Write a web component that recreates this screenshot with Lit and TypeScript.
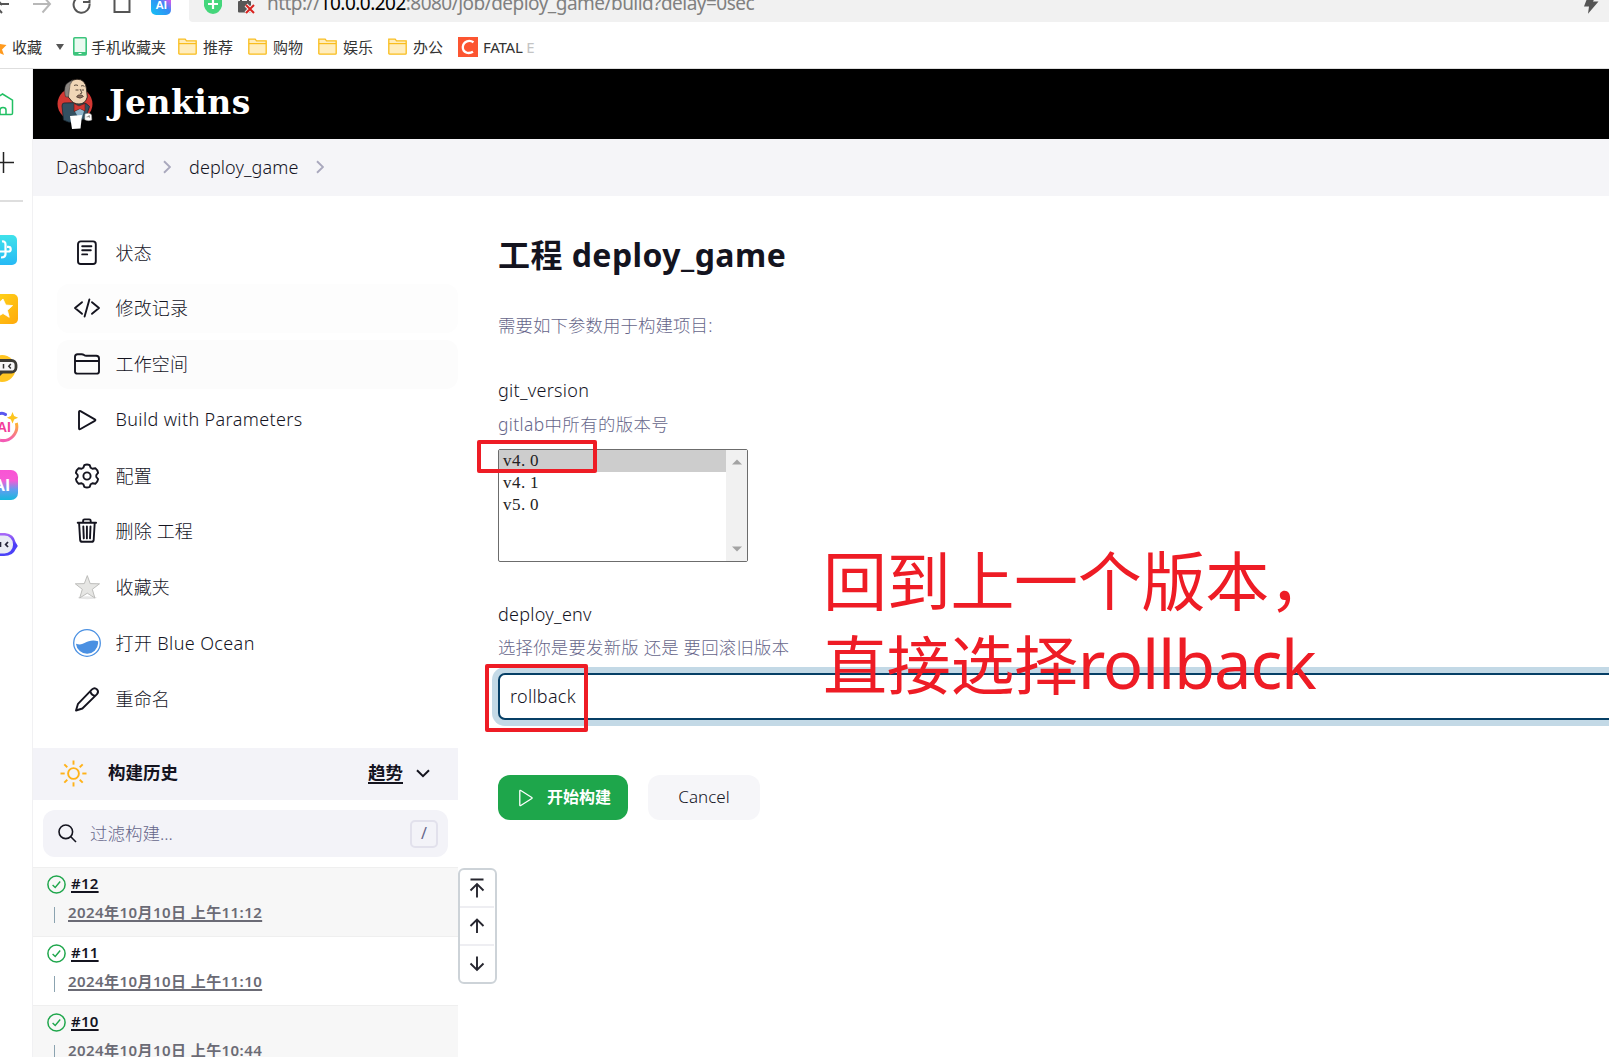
import { LitElement, html, css, svg, TemplateResult } from "lit";
import { customElement } from "lit/decorators.js";

const icons: Record<string, TemplateResult> = {
  status: html`<svg class="ic" viewBox="0 0 28 28"><g fill="none" stroke="#14141f" stroke-width="1.9" stroke-linecap="round" stroke-linejoin="round"><rect x="5" y="2.4" width="17.8" height="22.6" rx="2.8"/><path d="M9.2 7.2h9.2M9.2 11.3h8.6M9.2 15.4h5"/></g></svg>`,
  changes: html`<svg class="ic" viewBox="0 0 28 28"><g fill="none" stroke="#14141f" stroke-width="1.9" stroke-linecap="round" stroke-linejoin="round"><path d="M9 8.2 2 14l7 5.8M19 8.2l7 5.8-7 5.8M16.4 5.4l-4.8 17.2"/></g></svg>`,
  folder: html`<svg class="ic" viewBox="0 0 28 28"><g fill="none" stroke="#14141f" stroke-width="1.9" stroke-linejoin="round"><path d="M2 21.4V6.8Q2 4.2 4.6 4.2h4q1.4 0 2.4.8t2.4.8h9.8q2.8 0 2.8 2.6v13q0 2.2-2.4 2.2H4.4Q2 23.600 2 21.400zM2 11h24"/></g></svg>`,
  play: html`<svg class="ic" viewBox="0 0 28 28"><path d="M6 6v16.200q0 1.600 1.500.8l14.300-8.100q1.300-.8 0-1.600L7.500 5.200Q6 4.400 6 6z" fill="none" stroke="#14141f" stroke-width="1.9" stroke-linejoin="round"/></svg>`,
  gear: html`<svg class="ic" viewBox="0 0 28 28"><g fill="none" stroke="#14141f" stroke-width="1.9" stroke-linejoin="round"><path d="M11.300 3.100q2.700-1.200 5.400 0l1 2.700 1.700 1 3-.5q2.300 1.700 2.700 4.600L23.300 13v2l1.800 2.100q-.4 2.900-2.700 4.600l-3-.5-1.700 1-1 2.700q-2.700 1.200-5.400 0l-1-2.700-1.700-1-3 .5q-2.300-1.700-2.700-4.600L4.700 15v-2l-1.800-2.100q.4-2.900 2.700-4.600l3 .5 1.700-1z"/><circle cx="14" cy="14" r="3.600"/></g></svg>`,
  trash: html`<svg class="ic" viewBox="0 0 28 28"><g fill="none" stroke="#14141f" stroke-width="1.900" stroke-linecap="round" stroke-linejoin="round"><path d="M4.700 5.800h18.400M10.100 5.600V3.800q0-1.400 1.400-1.400h4.800q1.400 0 1.400 1.400v1.800M6.100 6l1 16.800q.2 2 2.200 2h9.200q2 0 2.200-2l1-16.800M10.300 9.400l.5 12M13.900 9.400v12M17.500 9.400l-.5 12"/></g></svg>`,
  star: html`<svg class="ic" viewBox="0 0 28 28"><ellipse cx="14.300" cy="24.800" rx="9.500" ry="1.500" fill="#e6e6e6"/><path d="m14.300 2.600 2.900 8 9.300.2-7.200 5.500 2.600 8.700-7.600-4.800L6.700 25l2.600-8.700-7-5.500 9-.2z" fill="#e6e6e4" stroke="#b8b8b6" stroke-width=".9" stroke-linejoin="round"/></svg>`,
  ocean: html`<svg class="ic" viewBox="0 0 28 28"><circle cx="14" cy="14" r="13.300" fill="#fff" stroke="#4a90e2" stroke-width="1.300"/><path d="M3 14.800c3 .8 5.500 1 8.500-.7 4-2.400 8.500-3.300 13.600-1.900v2.300A11.100 11.100 0 0 1 3 15z" fill="#4a90e2"/></svg>`,
  pencil: html`<svg class="ic" viewBox="0 0 28 28"><g fill="none" stroke="#14141f" stroke-width="1.900" stroke-linejoin="round"><path d="M3 25.500 5 18.800 19 4.400q2.600-2.400 5 0 2.200 2.500-.2 5L9.400 23.500zM17.300 6.200q1 4 5 4.800"/></g></svg>`,
};

const arrows = [
  svg`<path d="M1.500 1.500h13M8 19.500V6M1.500 12.500 8 6l6.500 6.500"/>`,
  svg`<path d="M8 17V3.500M1.500 10 8 3.500l6.500 6.500"/>`,
  svg`<path d="M8 2.500V16M1.500 9.500 8 16l6.500-6.500"/>`,
];

const nav: [string, string][] = [
  ["status", "状态"], ["changes", "修改记录"], ["folder", "工作空间"], ["play", "Build with Parameters"], ["gear", "配置"],
  ["trash", "删除 工程"], ["star", "收藏夹"], ["ocean", "打开 Blue Ocean"], ["pencil", "重命名"],
];

const builds = [
  { id: "#12", date: "2024年10月10日 上午11:12" },
  { id: "#11", date: "2024年10月10日 上午11:10" },
  { id: "#10", date: "2024年10月10日 上午10:44" },
];

@customElement("app-root")
export class AppRoot extends LitElement {
  static styles = css`
    :host { display: block; position: relative; width: 1609px; height: 1057px; overflow: hidden; background: #fff; color: #14141f;
      font-family: "Noto Sans", "Noto Sans CJK SC", sans-serif; font-size: 18px; font-weight: 300; white-space: nowrap; }
    * { box-sizing: border-box; }
    svg { display: block; flex: none; }
    .toolbar { display: flex; height: 22px; }
    .tools { flex: none; width: 189px; height: 22px; }
    .address { flex: 1; display: flex; background: #f1f1f1; border-radius: 0 0 0 4px; overflow: hidden; }
    .url { margin: -12px 0 0 11px; line-height: 30px; font-size: 19px; font-weight: 400; color: #808080; flex: 1; letter-spacing: -.53px; }
    .host { color: #000; }
    .bolt { margin-right: 9px; }
    .bookmarks { display: flex; align-items: center; height: 46px; font-size: 15px; color: #333; font-weight: 400; }
    .bm { display: flex; align-items: center; gap: 6px; width: 70px; flex: none; padding-top: 3px; }
    .bm.fav { width: 73px; gap: 5px; }
    .bm.phone { width: 105px; gap: 4px; }
    .bm.fatal { width: 90px; letter-spacing: -.25px; gap: 5px; }
    .dim { color: #c4c4c4; }
    .body { display: flex; height: 989px; border-top: 1px solid #dedede; }
    .rail { flex: none; width: 33px; border-right: 1px solid #f1f1f3; }
    .content { flex: 1; min-width: 0; }
    .header { height: 70px; background: #000; display: flex; align-items: center; padding-left: 24px; gap: 16px; color: #fff; }
    .brand { font: bold 33px/40px "DejaVu Serif", serif; letter-spacing: .45px; margin-top: -3px; }
    .crumbs { height: 57px; background: #f5f5f8; display: flex; align-items: center; padding: 0 0 1px 23px; font-size: 18px; }
    .crumbs span { line-height: 28px; padding-bottom: 1px; }
    .c1 { width: 107px; letter-spacing: -.15px; } .c2 { width: 127px; letter-spacing: .1px; }
    .chev { margin-right: 18px; }
    .cols { display: flex; height: 862px; }
    .side { flex: none; width: 425px; }
    .nav { height: 552px; padding: 32px 0 0 24px; display: flex; flex-direction: column; gap: 6.75px; }
    .item { flex: none; height: 49px; border-radius: 12px; display: flex; align-items: center; padding-left: 15.500px; gap: 15px; letter-spacing: .15px; }
    .item span { padding-bottom: 2px; }
    .item.latin { letter-spacing: .38px; }
    .item.tint { background: #fdfdfd; }
    .item.tint2 { background: #fcfcfc; }
    .ic { width: 28px; height: 28px; }
    .hist { height: 52px; background: #f3f3f8; display: flex; align-items: center; padding: 0 28px 2px 26.500px; font-size: 17.500px; font-weight: 700; }
    .hist .t { margin-left: 21.500px; flex: 1; padding-bottom: 4px; }
    .u { text-decoration: underline; text-underline-offset: 3px; text-decoration-thickness: 1.500px; }
    .hist .u { margin-right: 13px; padding-bottom: 4px; }
    .search { height: 47px; margin: 10px 10px; background: #f3f3f8; border-radius: 12px; display: flex; align-items: center; padding: 0 10px 0 15px; color: #66668a; }
    .ph { flex: 1; margin-left: 13px; font-size: 17.500px; padding-bottom: 2px; }
    .key { width: 28px; height: 28px; border: 2px solid #e2e1ec; border-radius: 5px; font-size: 16px; font-weight: 400; line-height: 23px; text-align: center; }
    .build { height: 69px; border-top: 1px solid #efefef; padding: 2px 0 0 13.500px; }
    .build.odd { background: #f7f7f7; }
    .bl { display: flex; align-items: center; height: 26px; gap: 5.500px; font-size: 15px; font-weight: 600; letter-spacing: .25px; }
    .bl svg { margin-top: 2px; }
    .bl .u, .bd .u { text-underline-offset: 2px; padding-bottom: 1px; }
    .bd { display: flex; align-items: center; height: 31px; color: #6b6b75; font-size: 15px; font-weight: 600; padding-left: 7.500px; gap: 13px; letter-spacing: .43px; }
    .bar { width: 1px; height: 16px; background: #8ba3b0; margin-top: 7px; }
    .main { flex: 1; min-width: 0; padding: 37px 0 0 40px; display: flex; flex-direction: column; }
    h1 { margin: 0; height: 44px; line-height: 44px; font-size: 32px; font-weight: 700; letter-spacing: .45px; }
    .txt { line-height: 28px; height: 28px; letter-spacing: .28px; }
    .txt.muted { color: #66668a; font-size: 17.400px; letter-spacing: .22px; }
    .txt.intro { margin-top: 34px; letter-spacing: .12px; }
    .l1 { margin-top: 37px; } .txt.d1 { margin-top: 6px; letter-spacing: .4px; }
    .list { margin-top: 11px; width: 250px; height: 113px; border: 1px solid #6c6c6c; border-radius: 2px; display: flex; font: 400 17px/22px "Liberation Serif", serif; letter-spacing: .5px; color: #222; }
    .opts { flex: 1; }
    .opt { padding-left: 4px; height: 22px; }
    .opt.sel { background: #cdcdcd; }
    .dot { margin-right: 4.250px; }
    .sb { width: 21px; background: #f1f1f1; display: flex; flex-direction: column; justify-content: space-between; align-items: center; padding: 9px 0; }
    .l2 { margin-top: 38px; } .d2 { margin-top: 5px; }
    .select { margin-top: 12px; height: 47px; width: 1200px; border: 2px solid #063f66; border-radius: 7px; box-shadow: 0 0 0 6px #c3d9e6; line-height: 42px; padding-left: 10px; background: #fff; flex: none; letter-spacing: .28px; }
    .btns { display: flex; gap: 20px; margin-top: 55px; font-size: 17px; }
    .go { width: 130px; height: 45px; border-radius: 12px; background: #1ea64b; color: #fff; display: flex; align-items: center; padding-left: 20px; gap: 13px; font-weight: 700; font-size: 16px; }
    .go span { padding-bottom: 3px; }
    .cancel { width: 112px; height: 45px; border-radius: 12px; background: #f6f6f9; line-height: 44px; text-align: center; }
    .float { position: absolute; left: 458px; top: 868px; width: 39px; height: 116px; border: 2px solid #cdd3d8; border-radius: 6px; background: #fff; display: flex; flex-direction: column; padding-right: 1px; }
    .float div { flex: 1; display: flex; align-items: center; justify-content: center; }
    .float div + div { border-top: 2px solid #eeeef2; }
    .box { position: absolute; border: 4px solid #ee1c25; border-radius: 2px; }
    .b1 { left: 477px; top: 440px; width: 120px; height: 33px; }
    .b2 { left: 485px; top: 664px; width: 103px; height: 68px; }
    .note { position: absolute; left: 823px; top: 540px; color: #ee1c25; font-size: 64px; line-height: 82px; height: 164px; font-weight: 400; letter-spacing: -.3px; }
    .note div { height: 82px; }
    .lat { font-size: 67px; letter-spacing: -1.300px; }
  `;

  private folder() {
    return html`<svg width="19" height="17" viewBox="0 0 19 17"><path d="M.8 15.200V1.200h6.400l1.300 1.600h9.700v12.600q0 .8-.8.8H1.600q-.8 0-.8-1z" fill="#ffedbd" stroke="#f9bd1e" stroke-width="1.300"/><path d="M1 5.600h17" stroke="#f9bd1e" stroke-width="1.200"/></svg>`;
  }

  private tools() {
    return html`<svg class="tools" viewBox="0 0 189 22">
      <defs><linearGradient id="ai" x1="0" y1="1" x2="1" y2="0"><stop offset="0" stop-color="#14c4f4"/><stop offset=".55" stop-color="#338cf5"/><stop offset=".8" stop-color="#c65df0"/><stop offset="1" stop-color="#ff4fae"/></linearGradient></defs>
      <g fill="none" stroke="#555" stroke-width="2"><path d="M-8 4H9M-5-3l7 8M-6 4l8 9"/><path d="M33 4h17M42.500-4.500 50 4l-7.500 8.500" stroke="#b8b8b8"/>
      <path d="M89.500 3.500A8 8 0 1 1 86-2M83 2h6.500V-5" /><path d="M114.500-1V12h15V-1"/></g>
      <rect x="151" y="-6" width="20" height="21" rx="5" fill="url(#ai)"/><text x="155.500" y="9" font-size="11.500" font-weight="700" fill="#fff" font-family="Liberation Sans">AI</text></svg>`;
  }

  private rail() {
    return html`<svg width="32" height="500" viewBox="0 69 32 500">
      <defs><linearGradient id="rb" x2="0" y2="1"><stop stop-color="#3fe2ea"/><stop offset="1" stop-color="#27b9f5"/></linearGradient>
      <linearGradient id="ry" x2="1" y2="1"><stop stop-color="#ffd91c"/><stop offset="1" stop-color="#ffa90b"/></linearGradient>
      <linearGradient id="rp" x2="0" y2="1"><stop stop-color="#f954d4"/><stop offset=".35" stop-color="#f65bd6"/><stop offset=".65" stop-color="#639cf0"/><stop offset="1" stop-color="#16b8dc"/></linearGradient>
      <linearGradient id="rr" x2="0" y2="1"><stop stop-color="#b06cf7"/><stop offset=".5" stop-color="#4b3df7"/><stop offset="1" stop-color="#4a42f8"/></linearGradient>
      <linearGradient id="ro" x2="0" y2="1"><stop stop-color="#ffb52e"/><stop offset="1" stop-color="#f35bb5"/></linearGradient></defs>
      <path d="M-8 100.500 2.500 94l10 6.200v13q0 1.400-1.400 1.400H-8M0 114.500v-4.500q0-2.500 3-2.500t3 2.500v4.500" fill="none" stroke="#21c063" stroke-width="1.500"/>
      <path d="M-7 162.500h21M3.500 152v21" stroke="#222" stroke-width="1.500"/>
      <path d="M0 201h23" stroke="#dedede" stroke-width="2"/>
      <rect x="-13" y="235" width="30" height="30" rx="5" fill="url(#rb)"/>
      <path d="M-2 251.500H8.500q2.200 0 2.200-2.300t-2.200-2.300H7M2 241.500q3.500-.5 3.500 3v9.500q0 3.500-4.500 3.500" fill="none" stroke="#fff" stroke-width="2.200"/>
      <rect x="-12" y="294" width="30" height="30" rx="5" fill="url(#ry)"/>
      <path d="m3 299 2.800 6 6.800.6-5.200 4.700 1.800 7L3 313.500l-7 4v-12z" fill="#fff" stroke="#fff" stroke-width=".8"/>
      <circle cx="2" cy="368.500" r="13.500" fill="#ffc522"/><rect x="-12" y="360.500" width="28" height="11.500" rx="4.500" fill="#f7f7f7" stroke="#3c3b36" stroke-width="2.800"/><path d="M3.500 364v4.500M10.800 364l-2 2.200 2 2.300" stroke="#333" stroke-width="1.500" fill="none"/><path d="M-1 373v4l4-4" fill="#3c3b36"/>
      <path d="M16.300 423A14 14 0 0 1 0 440.300" fill="none" stroke="url(#ro)" stroke-width="3"/><path d="M0 413.500q3-1 5.500 1" fill="none" stroke="#5a57ef" stroke-width="3" stroke-linecap="round"/>
      <path d="m12.500 412 1.600 4 4 1.700-4 1.700-1.600 4.200-1.600-4.200-4-1.700 4-1.700z" fill="#fdc51e"/><text x="-3" y="432" font-size="14" font-weight="700" fill="#f23d9a" font-family="Liberation Sans">AI</text>
      <rect x="-12" y="470" width="30" height="30" rx="7" fill="url(#rp)"/><text x="-7" y="491" font-size="17" font-weight="700" fill="#fff" font-family="Liberation Sans">AI</text>
      <path d="M-8 533H5q9 1 10.500 9l2.300 4-2.300 3.500Q13 556 4 556H-8z" fill="url(#rr)"/><rect x="-14" y="535.500" width="27" height="18" rx="8.500" fill="#e9ebf4"/><path d="M.4 542v5M8 542l-2.300 2.500L8 547" stroke="#26263a" stroke-width="1.800" fill="none"/>
    </svg>`;
  }

  private butler() {
    return html`<svg width="36" height="52" viewBox="0 0 36 52">
      <ellipse cx="18" cy="26" rx="17.500" ry="16.500" fill="#d33833"/>
      <path d="M7 25q-2 0-2 3l1.500 14q5 3 11 2.500l11-4 4-12q-3-4-8-4z" fill="#335061" stroke="#1a2730" stroke-width=".8"/>
      <path d="M9 12Q10 2 20 1.200q8.500 0 9.500 9.800l.8 8q-1.800 7-8.300 7-6 0-9-5L9.500 17z" fill="#f0d6b7" stroke="#2a211c" stroke-width=".9"/>
      <path d="M8 16.500Q6.500 8 10.500 5L16 1.800Q12 6.500 12.300 12l-.8 7-3-.2z" fill="#8a8580" stroke="#2b2b2b" stroke-width=".5"/>
      <path d="M17 7.500q2-1.200 4 0M24 8q2-1 3.500.4M18.500 12h3M24.500 12h2.500M23 11l2 4-2.200 1" stroke="#332720" stroke-width=".8" fill="none"/>
      <path d="M19.500 19q4 2.600 7-.5l-1.500-1.500h-4z" fill="#8d6e5c" stroke="#332720" stroke-width=".6"/>
      <path d="M17 25.500l5 2.500 6-2.500v7.500l-5-2-6 2.500z" fill="#d33833" stroke="#5c1713" stroke-width=".6"/>
      <path d="M18 33.500l5-2.500 4 2-2 7-4-1z" fill="#90b6cd"/>
      <path d="m13 38 12-1-1.500 13.500-8.500.5z" fill="#fff"/><path d="M28 36q5-2 6.500 1l.3 5q-3 1.500-7-.2z" fill="#fff" stroke="#999" stroke-width=".5"/><path d="M29.500 39l3-.7M32 37l.4 2.800" stroke="#555" stroke-width=".6"/>
    </svg>`;
  }

  private chevron() {
    return html`<svg class="chev" width="8" height="14" viewBox="0 0 8 14"><path d="m1 1.200 6 5.800-6 5.800" fill="none" stroke="#a9a8bd" stroke-width="1.900"/></svg>`;
  }

  render() {
    return html`
      <div class="toolbar">${this.tools()}
        <div class="address">
          <svg width="67" height="22" viewBox="189 0 67 22"><path d="M204-4h18v10q-2 7-9 8-7-1-9-8z" fill="#44d67b"/><path d="M208 4h10M213-1V9" stroke="#fff" stroke-width="2.200"/>
          <rect x="238" y="1" width="13" height="11.500" rx="1" fill="#575757"/><path d="M241 2v-4h7v4" fill="none" stroke="#575757" stroke-width="2"/><path d="m246 5 8 8m0-8-8 8" stroke="#f1f1f1" stroke-width="4"/><path d="m246 5 8 8m0-8-8 8" stroke="#d9231f" stroke-width="2"/></svg>
          <div class="url">http://<span class="host">10.0.0.202</span>:8080/job/deploy_game/build?delay=0sec</div>
          <svg class="bolt" width="20" height="16" viewBox="0 0 20 16"><path d="M8-4 4 6.500h5L8 13.800 18.500 1.500h-5.500L16-4z" fill="#555"/></svg>
        </div>
      </div>
      <div class="bookmarks">
        <div class="bm fav"><svg width="7" height="18" viewBox="0 0 7 18"><path d="m-3 1 3 5 6.500 1L2 11.500 4 17l-7-3z" fill="#ff9a1e"/></svg><span>收藏</span><svg width="21" height="8" viewBox="-9 0 21 8"><path d="M0 1h8L4 7z" fill="#555"/></svg></div>
        <div class="bm phone"><svg width="14" height="19" viewBox="0 0 14 19"><rect x=".8" y=".8" width="12.400" height="17.200" rx="1" fill="#eafaf0" stroke="#3cc47c" stroke-width="1.600"/><path d="M1 15h12v3H1z" fill="#3cc47c"/><path d="M5.500 16.500h3" stroke="#fff"/></svg><span>手机收藏夹</span></div>
        ${["推荐", "购物", "娱乐", "办公"].map((t) => html`<div class="bm">${this.folder()}<span>${t}</span></div>`)}
        <div class="bm fatal"><svg width="20" height="20" viewBox="0 0 20 20"><path d="M0 0h20v20H0z" fill="#fc5531"/><path d="M15.500 5.300q-3-2-6.500-1-3.800 1.400-4.200 5.500-.2 4.500 3.800 5.900 3.300.9 6.400-1" fill="none" stroke="#fff" stroke-width="2.300"/></svg><span>FATAL <span class="dim">E</span></span></div>
      </div>
      <div class="body">
        <div class="rail">${this.rail()}</div>
        <div class="content">
          <div class="header">${this.butler()}<div class="brand">Jenkins</div></div>
          <div class="crumbs"><span class="c1">Dashboard</span>${this.chevron()}<span class="c2">deploy_game</span>${this.chevron()}</div>
          <div class="cols">
            <div class="side">
              <div class="nav">${nav.map(([i, t], n) => html`<div class="item ${n === 1 ? "tint" : n === 2 ? "tint2" : ""} ${/[A-Z]/.test(t) ? "latin" : ""}">${icons[i]}<span>${t}</span></div>`)}</div>
              <div class="hist">
                <svg width="27" height="27" viewBox="-13.500 -13.500 27 27"><g fill="none" stroke="#ffb219" stroke-width="1.900"><circle r="5.400"/>${[0, 45, 90, 135, 180, 225, 270, 315].map((a) => svg`<path d="M0-8.800V-13" transform="rotate(${a})"/>`)}</g></svg>
                <span class="t">构建历史</span><span class="u">趋势</span>
                <svg width="14" height="9" viewBox="0 0 14 9"><path d="m1 1.200 6 6 6-6" fill="none" stroke="#14141f" stroke-width="2"/></svg>
              </div>
              <div class="search">
                <svg width="19" height="19" viewBox="0 0 19 19"><circle cx="7.800" cy="7.800" r="6.800" fill="none" stroke="#14141f" stroke-width="1.600"/><path d="m12.800 12.800 5.200 5.200" stroke="#14141f" stroke-width="1.600"/></svg>
                <span class="ph">过滤构建...</span><span class="key">/</span>
              </div>
              ${builds.map((b, i) => html`<div class="build ${i % 2 ? "" : "odd"}">
                <div class="bl"><svg width="19" height="19" viewBox="0 0 19 19"><g fill="none" stroke="#1ea64b"><circle cx="9.500" cy="9.500" r="8.600" stroke-width="1.500"/><path d="m5.600 10 2.600 2.500 5-6" stroke-width="1.400"/></g></svg><span class="u">${b.id}</span></div>
                <div class="bd"><i class="bar"></i><span class="u">${b.date}</span></div>
              </div>`)}
            </div>
            <div class="main">
              <h1>工程 deploy_game</h1>
              <div class="txt muted intro">需要如下参数用于构建项目:</div>
              <div class="txt l1">git_version</div>
              <div class="txt muted d1">gitlab中所有的版本号</div>
              <div class="list">
                <div class="opts">${[["v4", "0"], ["v4", "1"], ["v5", "0"]].map(([a, b], i) => html`<div class="opt ${i ? "" : "sel"}">${a}<span class="dot">.</span>${b}</div>`)}</div>
                <div class="sb"><svg width="10" height="6"><path d="M0 5.500 5 .5l5 5z" fill="#a3a3a3"/></svg><svg width="10" height="6"><path d="M0 .5l5 5 5-5z" fill="#a3a3a3"/></svg></div>
              </div>
              <div class="txt l2">deploy_env</div>
              <div class="txt muted d2">选择你是要发新版 还是 要回滚旧版本</div>
              <div class="select">rollback</div>
              <div class="btns">
                <div class="go"><svg width="16" height="18" viewBox="0 0 16 18"><path d="M1.800 2v14q0 1 1 .5l11-7q.7-.5 0-1l-11-7q-1-.5-1 .5z" fill="none" stroke="#fff" stroke-width="1.300"/></svg><span>开始构建</span></div>
                <div class="cancel">Cancel</div>
              </div>
            </div>
          </div>
        </div>
      </div>
      <div class="float">${arrows.map((a) => html`<div><svg width="16" height="21" viewBox="0 0 16 21"><g fill="none" stroke="#26262f" stroke-width="1.900">${a}</g></svg></div>`)}</div>
      <div class="box b1"></div><div class="box b2"></div>
      <div class="note"><div>回到上一个版本，</div><div>直接选择<span class="lat">rollback</span></div></div>
    `;
  }
}
